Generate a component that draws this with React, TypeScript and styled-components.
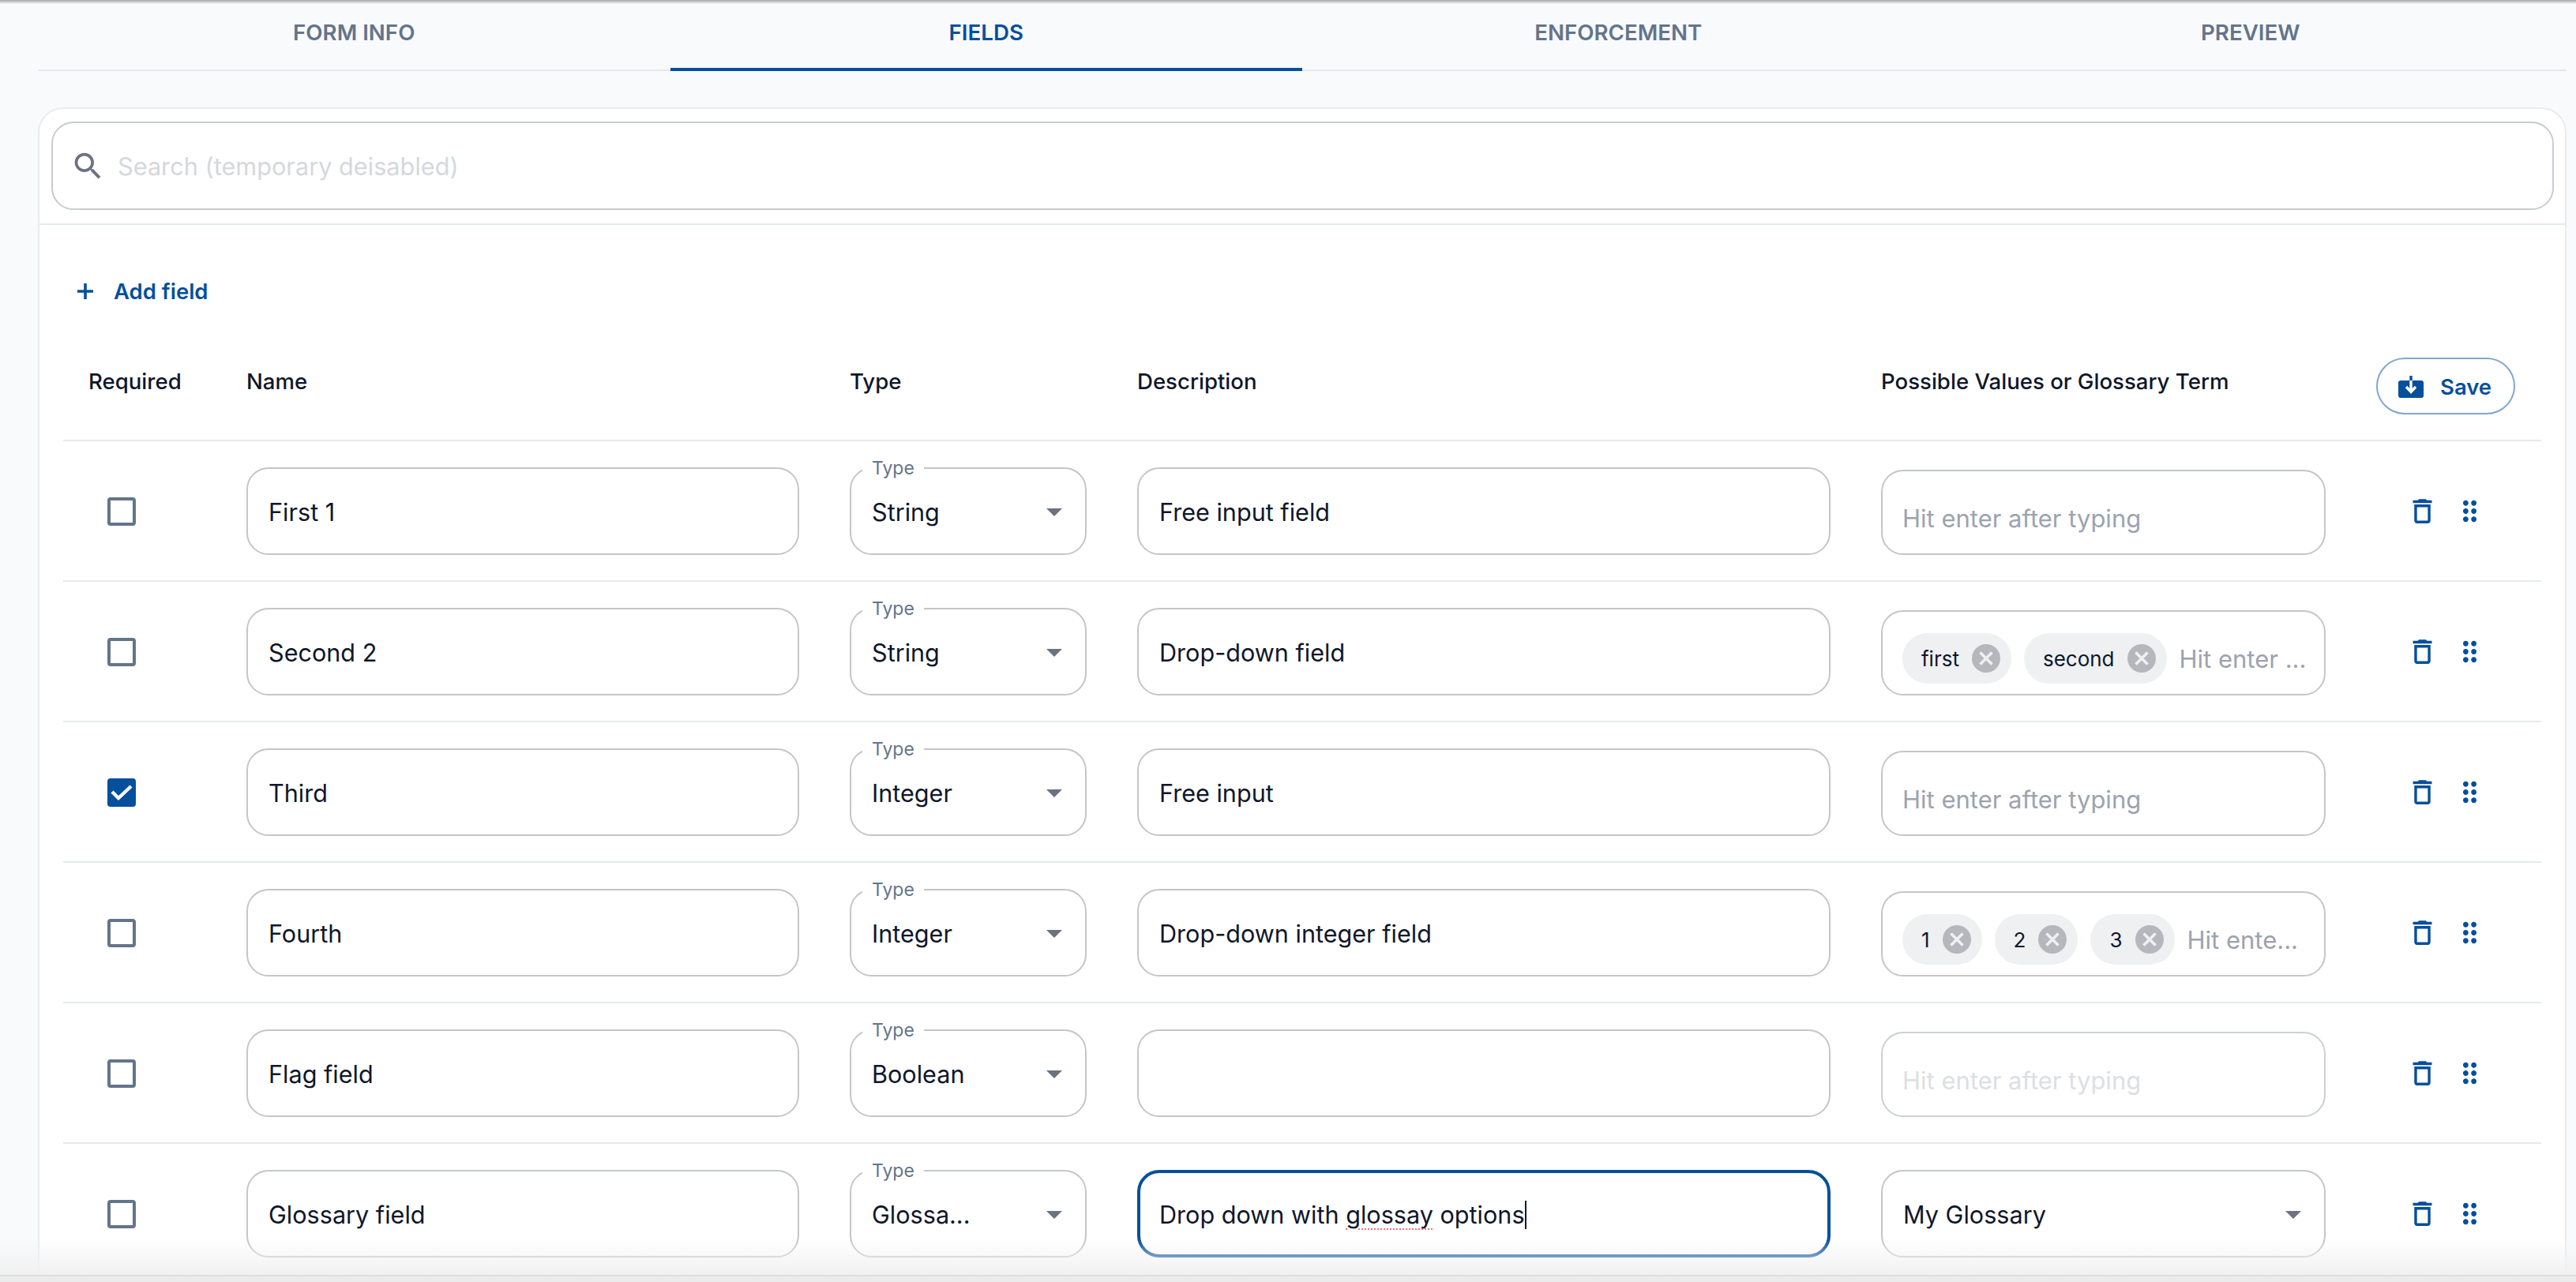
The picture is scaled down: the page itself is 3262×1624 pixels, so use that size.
import styled, { createGlobalStyle, css } from "styled-components";

const blue = "#054f9c";
const ink = "#0f172a";

const GlobalStyle = createGlobalStyle`
  html, body { margin: 0; padding: 0; background: #f8fafc; }
  * { box-sizing: border-box; }
  body { font-family: Inter, "Noto Sans", "Liberation Sans", sans-serif; color: ${ink}; }
`;

const Page = styled.div`
  position: relative;
  width: 3262px;
  height: 1624px;
  overflow: hidden;
  background: #f8fafc;
  padding: 0 12px 0 48px;
`;

const TopShade = styled.div`
  position: absolute;
  top: 0;
  left: 0;
  right: 0;
  height: 5px;
  background: linear-gradient(#a3a6ab, #f8fafc);
`;

const BottomShade = styled.div`
  position: absolute;
  left: 0;
  right: 0;
  bottom: 0;
  height: 54px;
  background: linear-gradient(rgba(238, 238, 238, 0), #f1f1f1 45px, #dedede 45px, #dedede 47px, #ebebeb 47px);
`;

const Tabs = styled.div`
  display: grid;
  grid-template-columns: repeat(4, 1fr);
  height: 90px;
  border-bottom: 2px solid #e5e7eb;
`;

const Tab = styled.div<{ $active?: boolean }>`
  display: flex;
  justify-content: center;
  padding-top: 24px;
  height: 90px;
  font-size: 27.7px;
  line-height: 34px;
  font-weight: 600;
  color: ${(p) => (p.$active ? blue : "#64748b")};
  border-bottom: 4px solid ${(p) => (p.$active ? blue : "transparent")};
`;

const Card = styled.div`
  margin-top: 46px;
  height: 1600px;
  background: #fff;
  border: 2px solid #e9ebee;
  border-radius: 32px 32px 0 0;
`;

const SearchArea = styled.div`
  padding: 16px 14px 17px 15px;
  border-bottom: 2px solid #e5e9ee;
`;

const SearchBox = styled.div`
  display: flex;
  align-items: center;
  gap: 15px;
  height: 112px;
  padding-left: 22px;
  border: 2px solid #c8ccd1;
  border-radius: 28px;
  font-size: 30.7px;
  color: #d5d8dc;
`;

const AddRow = styled.div`
  display: flex;
  align-items: center;
  gap: 26px;
  height: 168px;
  padding-left: 48px;
  font-size: 27.5px;
  font-weight: 600;
  color: ${blue};
`;

const columns = css`
  display: grid;
  grid-template-columns: 167px 698px 298px 876px 561px 208px;
  column-gap: 66px;
`;

const Table = styled.div`
  margin: 0 30px;
`;

const HeaderRow = styled.div`
  ${columns};
  height: 104px;
  align-items: start;
`;

const HeaderCell = styled.div<{ $indent?: number }>`
  padding-top: 12px;
  margin-left: -1px;
  padding-left: ${(p) => p.$indent ?? 0}px;
  font-size: 27.6px;
  line-height: 36px;
  font-weight: 450;
`;

const SaveButton = styled.button`
  display: flex;
  align-items: center;
  gap: 21px;
  width: 176px;
  height: 72px;
  margin-left: -1px;
  padding: 2px 0 0 26px;
  background: #fff;
  border: 2px solid #82a6cf;
  border-radius: 36px;
  font: 600 27.5px Inter, sans-serif;
  color: ${blue};
`;

const Row = styled.div`
  ${columns};
  height: 178px;
  padding-top: 33px;
  border-top: 2px solid #e6e9ee;
`;

const CheckCell = styled.div`
  display: flex;
  align-items: center;
  height: 111px;
  padding-left: 56px;
`;

const Checkbox = styled.div<{ $checked?: boolean }>`
  display: flex;
  align-items: center;
  justify-content: center;
  width: 36px;
  height: 36px;
  border-radius: 4px;
  border: ${(p) => (p.$checked ? "none" : "4px solid #64748b")};
  background: ${(p) => (p.$checked ? blue : "#fff")};
`;

const Field = styled.div<{ $focused?: boolean }>`
  position: relative;
  display: flex;
  align-items: center;
  height: 111px;
  margin: 0 -1px;
  padding: 2px ${(p) => (p.$focused ? 24 : 26)}px 0;
  border: ${(p) => (p.$focused ? `4px solid ${blue}` : "2px solid #c4c6c8")};
  border-radius: 28px;
  font-size: 30.6px;
  white-space: nowrap;
`;

const SelectField = styled(Field)`
  justify-content: space-between;
  padding-right: 29px;
`;

const FieldLegend = styled.span`
  position: absolute;
  top: -15px;
  left: 14px;
  padding: 0 12px;
  background: #fff;
  font-size: 23px;
  line-height: 28px;
  color: #64748b;
`;

const Arrow = styled.span`
  width: 0;
  height: 0;
  border-left: 10px solid transparent;
  border-right: 10px solid transparent;
  border-top: 10px solid #6b7280;
`;

const TagBox = styled.div<{ $disabled?: boolean }>`
  display: flex;
  align-items: center;
  gap: 16px;
  height: 108px;
  margin: 3px -1px 0;
  padding: 15px 0 0 25px;
  border: 2px solid ${(p) => (p.$disabled ? "#ccd0d4" : "#c4c6c8")};
  border-radius: 28px;
  white-space: nowrap;
`;

const Hint = styled.span<{ $disabled?: boolean }>`
  font-size: 31px;
  color: ${(p) => (p.$disabled ? "#dcdfe3" : "#9ca3af")};
`;

const Chip = styled.span`
  display: flex;
  align-items: center;
  gap: 16px;
  height: 64px;
  margin-top: -1px;
  padding: 0 14px 0 24px;
  background: #eef0f2;
  border-radius: 32px;
  font-size: 26px;
`;

const ChipClose = styled.span`
  display: flex;
  align-items: center;
  justify-content: center;
  width: 36px;
  height: 36px;
  border-radius: 50%;
  background: #b5b7bd;
`;

const Misspelled = styled.span`
  text-decoration: underline dotted #f87171 2px;
  text-underline-offset: 6px;
`;

const Caret = styled.span`
  display: inline-block;
  width: 2px;
  height: 36px;
  margin-bottom: -7px;
  background: ${ink};
`;

const Actions = styled.div`
  display: flex;
  align-items: center;
  gap: 19px;
  height: 111px;
  padding-left: 37px;
  color: ${blue};
`;

const SearchIcon = () => (
  <svg width="45" height="45" viewBox="0 0 24 24" fill="#6b7280">
    <path d="M15.5 14h-.79l-.28-.27C15.41 12.59 16 11.11 16 9.5 16 5.91 13.09 3 9.5 3S3 5.91 3 9.5 5.91 16 9.5 16c1.61 0 3.09-.59 4.23-1.57l.27.28v.79l5 4.99L20.49 19l-4.99-5zm-6 0C7.01 14 5 11.99 5 9.5S7.01 5 9.5 5 14 7.01 14 9.5 11.99 14 9.5 14z" />
  </svg>
);

const PlusIcon = () => (
  <svg width="20" height="20" viewBox="0 0 20 20" stroke={blue} strokeWidth="3.6">
    <path d="M10 0v20M0 10h20" />
  </svg>
);

const SaveIcon = () => (
  <svg width="32" height="28" viewBox="0 0 32 28">
    <rect y="6" width="32" height="22" rx="3" fill={blue} />
    <path d="M16 0v7" stroke={blue} strokeWidth="3.4" strokeLinecap="round" />
    <path d="M16 6v13" stroke="#fff" strokeWidth="3.4" />
    <path d="M10 14l6 6.5 6-6.5" fill="none" stroke="#fff" strokeWidth="3.4" />
  </svg>
);

const CheckIcon = () => (
  <svg width="36" height="36" viewBox="0 0 36 36" fill="none" stroke="#fff" strokeWidth="4.4">
    <path d="M6 17l8 8L30 10" />
  </svg>
);

const CloseIcon = () => (
  <svg width="22" height="22" viewBox="0 0 22 22" stroke="#eef0f2" strokeWidth="3.6">
    <path d="M3.5 3.5l15 15M18.5 3.5l-15 15" />
  </svg>
);

const TrashIcon = () => (
  <svg width="41" height="41" viewBox="0 0 24 24" fill="currentColor">
    <path d="M6 19c0 1.1.9 2 2 2h8c1.1 0 2-.9 2-2V7H6v12zM8 9h8v10H8V9zm7.5-5l-1-1h-5l-1 1H5v2h14V4h-3.5z" />
  </svg>
);

const GripIcon = () => (
  <svg width="41" height="41" viewBox="0 0 24 24" fill="currentColor">
    <path d="M11 18c0 1.1-.9 2-2 2s-2-.9-2-2 .9-2 2-2 2 .9 2 2zm-2-8c-1.1 0-2 .9-2 2s.9 2 2 2 2-.9 2-2-.9-2-2-2zm0-6c-1.1 0-2 .9-2 2s.9 2 2 2 2-.9 2-2-.9-2-2-2zm6 4c1.1 0 2-.9 2-2s-.9-2-2-2-2 .9-2 2 .9 2 2 2zm0 2c-1.1 0-2 .9-2 2s.9 2 2 2 2-.9 2-2-.9-2-2-2zm0 6c-1.1 0-2 .9-2 2s.9 2 2 2 2-.9 2-2-.9-2-2-2z" />
  </svg>
);

interface IField {
  name: string;
  type: string;
  description: string;
  required?: boolean;
  chips?: string[];
  hint?: string;
  disabled?: boolean;
  glossary?: string;
  focused?: boolean;
}

const fields: IField[] = [
  { name: "First 1", type: "String", description: "Free input field" },
  { name: "Second 2", type: "String", description: "Drop-down field", chips: ["first", "second"], hint: "Hit enter ..." },
  { name: "Third", type: "Integer", description: "Free input", required: true },
  { name: "Fourth", type: "Integer", description: "Drop-down integer field", chips: ["1", "2", "3"], hint: "Hit ente..." },
  { name: "Flag field", type: "Boolean", description: "", disabled: true },
  { name: "Glossary field", type: "Glossa...", description: "", glossary: "My Glossary", focused: true },
];

function App() {
  return (
    <Page>
      <GlobalStyle />
      <TopShade />
      <Tabs>
        <Tab>FORM INFO</Tab>
        <Tab $active>FIELDS</Tab>
        <Tab>ENFORCEMENT</Tab>
        <Tab>PREVIEW</Tab>
      </Tabs>
      <Card>
        <SearchArea>
          <SearchBox>
            <SearchIcon />
            Search (temporary deisabled)
          </SearchBox>
        </SearchArea>
        <AddRow>
          <PlusIcon />
          Add field
        </AddRow>
        <Table>
          <HeaderRow>
            <HeaderCell $indent={33}>Required</HeaderCell>
            <HeaderCell>Name</HeaderCell>
            <HeaderCell>Type</HeaderCell>
            <HeaderCell>Description</HeaderCell>
            <HeaderCell>Possible Values or Glossary Term</HeaderCell>
            <SaveButton>
              <SaveIcon />
              Save
            </SaveButton>
          </HeaderRow>
          {fields.map((field) => (
            <Row key={field.name}>
              <CheckCell>
                <Checkbox $checked={field.required}>{field.required && <CheckIcon />}</Checkbox>
              </CheckCell>
              <Field>{field.name}</Field>
              <SelectField>
                <FieldLegend>Type</FieldLegend>
                {field.type}
                <Arrow />
              </SelectField>
              <Field $focused={field.focused}>
                {field.focused ? (
                  <span>
                    Drop down with <Misspelled>glossay</Misspelled> options
                    <Caret />
                  </span>
                ) : (
                  field.description
                )}
              </Field>
              {field.glossary ? (
                <SelectField>
                  {field.glossary}
                  <Arrow />
                </SelectField>
              ) : (
                <TagBox $disabled={field.disabled}>
                  {field.chips?.map((chip) => (
                    <Chip key={chip}>
                      {chip}
                      <ChipClose>
                        <CloseIcon />
                      </ChipClose>
                    </Chip>
                  ))}
                  <Hint $disabled={field.disabled}>{field.hint ?? "Hit enter after typing"}</Hint>
                </TagBox>
              )}
              <Actions>
                <TrashIcon />
                <GripIcon />
              </Actions>
            </Row>
          ))}
        </Table>
      </Card>
      <BottomShade />
    </Page>
  );
}

export default App;
